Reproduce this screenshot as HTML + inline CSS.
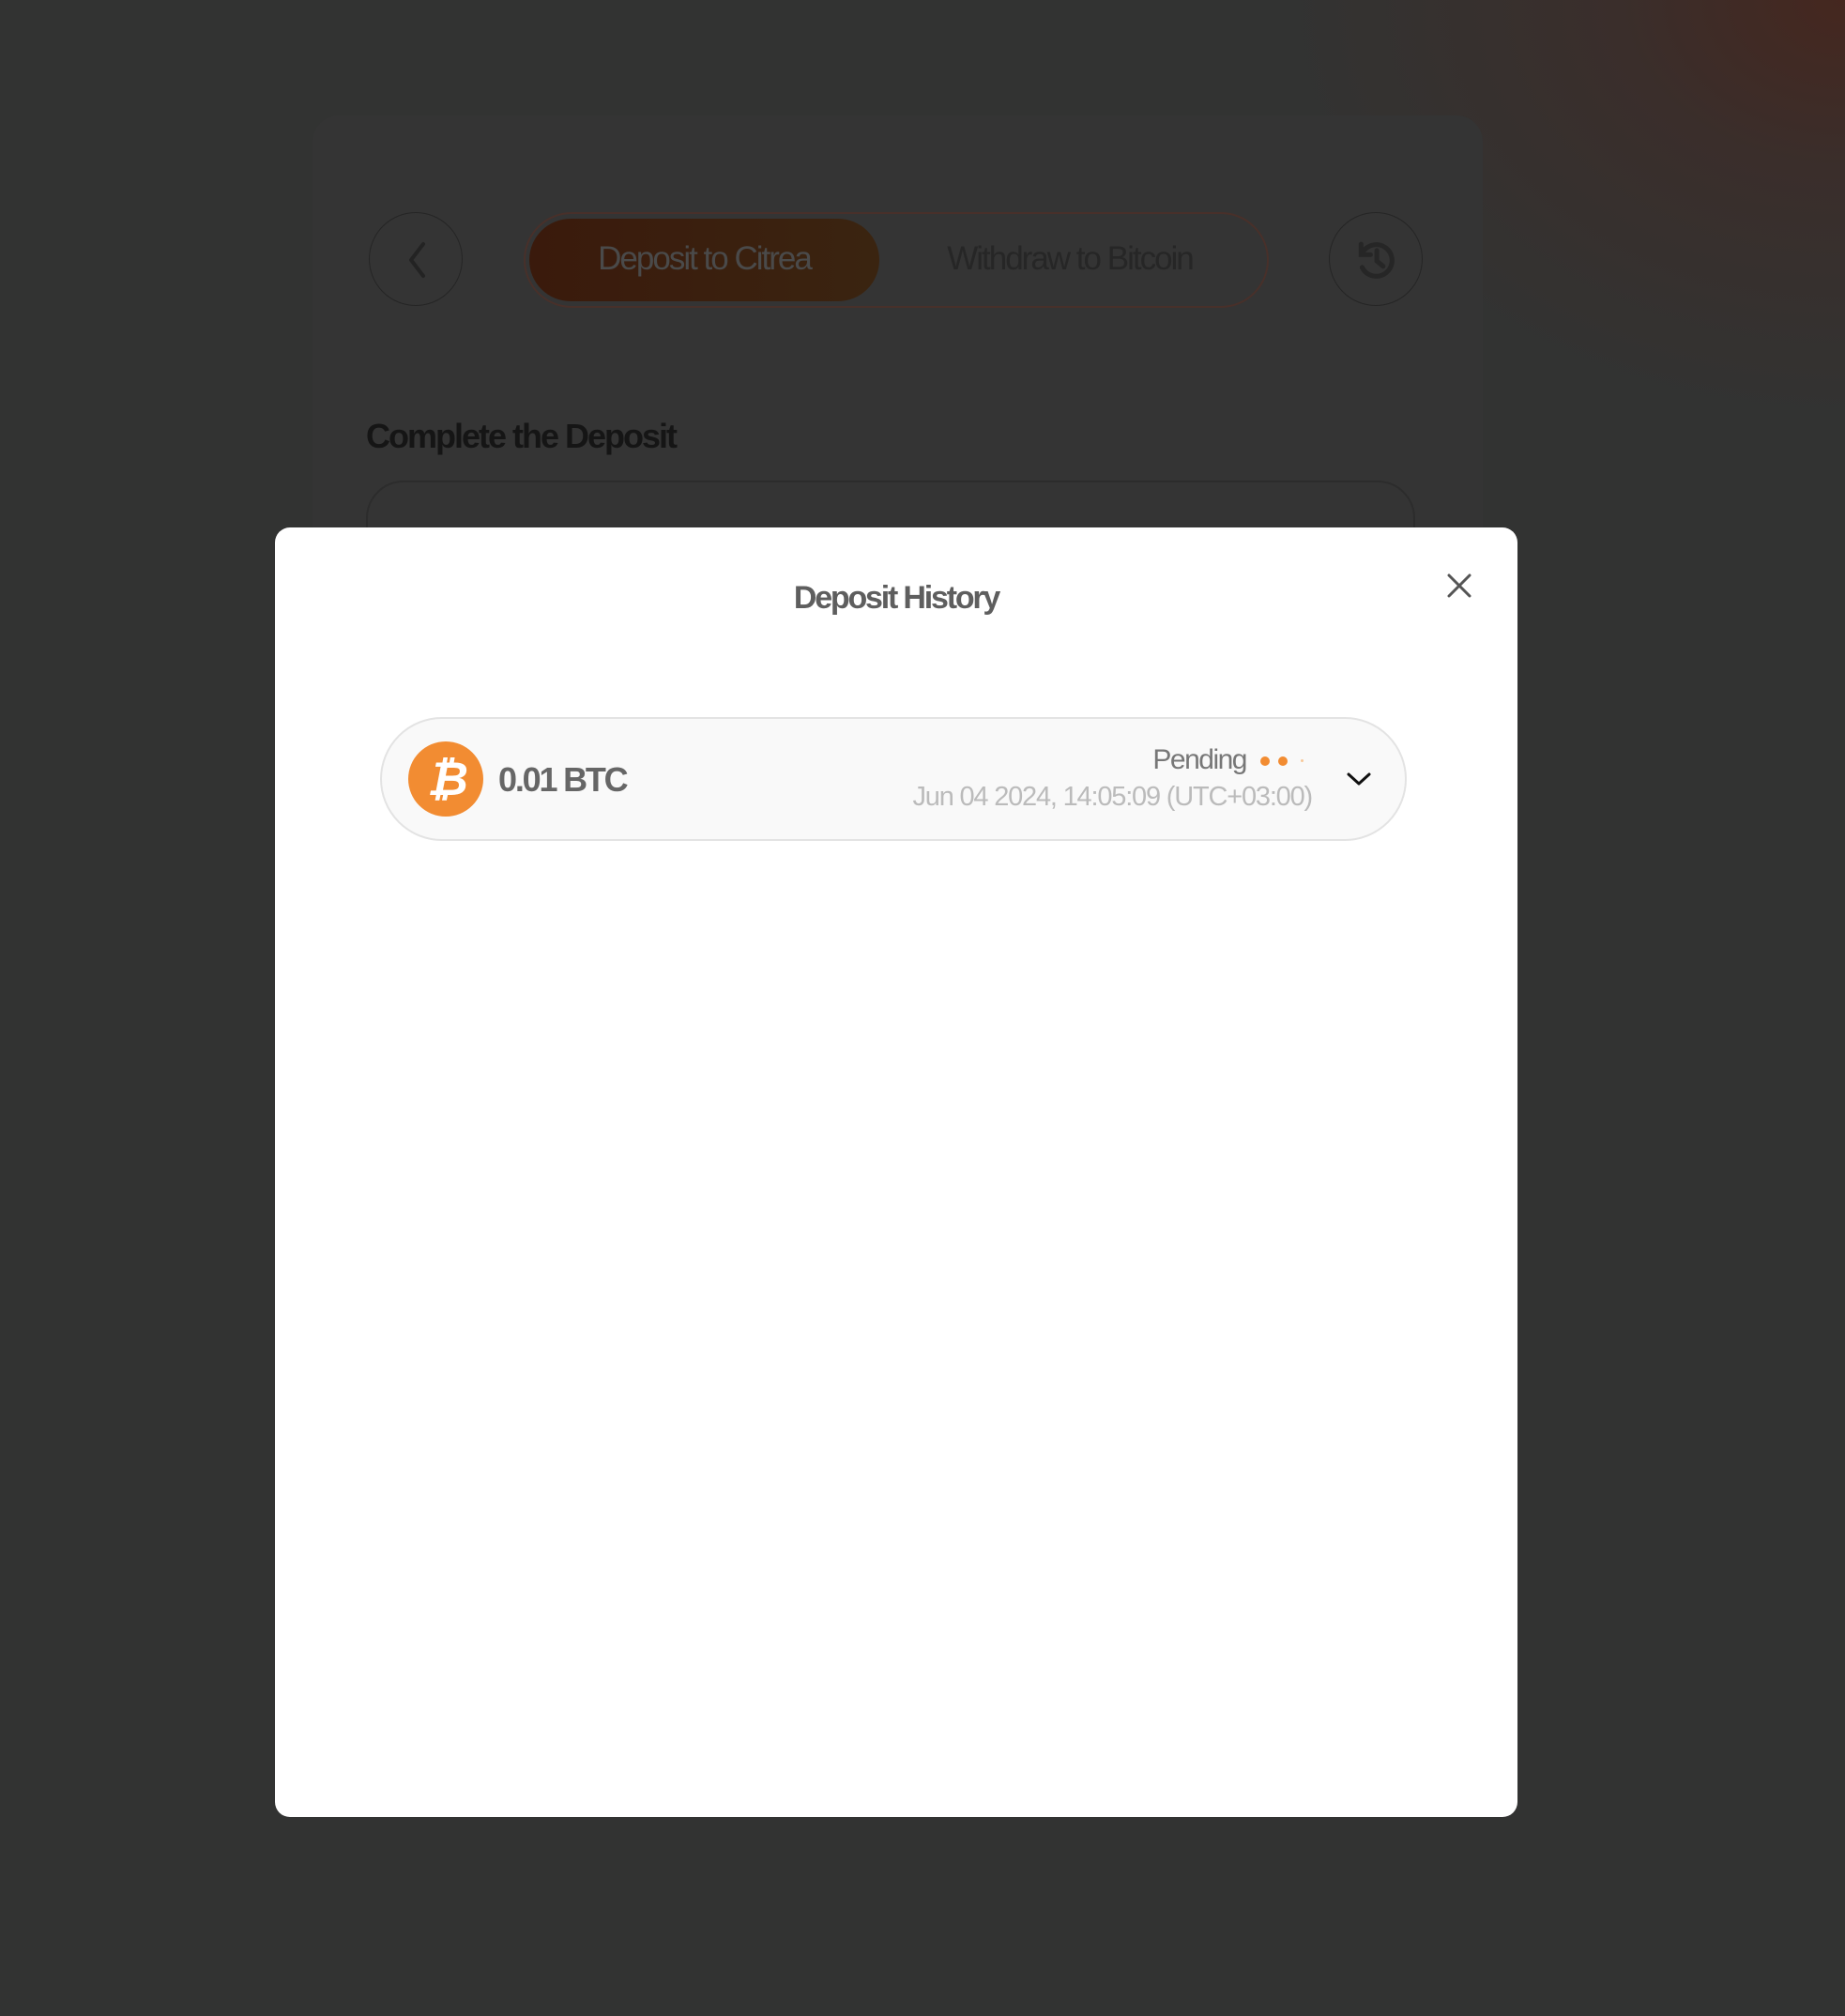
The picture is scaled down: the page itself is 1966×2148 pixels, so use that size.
<!DOCTYPE html>
<html><head><meta charset="utf-8"><style>
html,body{margin:0;padding:0;}
body{width:1966px;height:2148px;position:relative;overflow:hidden;font-family:"Liberation Sans",sans-serif;
background:radial-gradient(ellipse 600px 450px at 1966px 0px,#45271f 0%,#3a2e2b 40%,rgba(50,51,50,0) 100%),#323332;}
.abs{position:absolute;}
.card{left:333px;top:123px;width:1247px;height:700px;border-radius:28px;background:#343434;}
.circ{width:100px;height:100px;border:1.5px solid #252525;border-radius:50%;box-sizing:border-box;}
.tabs{left:558px;top:226px;width:794px;height:102px;border:2px solid #48302a;border-radius:51px;box-sizing:border-box;}
.act{left:564px;top:233px;width:373px;height:88px;border-radius:44px;background:linear-gradient(90deg,#3a1a0c,#3a2410);}
.tt{font-size:35px;letter-spacing:-2px;color:#4a4a4a;}
.modal{left:293px;top:562px;width:1324px;height:1374px;background:#fff;border-radius:16px;}
.row{left:405px;top:764px;width:1094px;height:132px;border:2px solid #e3e3e3;border-radius:66px;background:#f9f9f9;box-sizing:border-box;}
</style></head><body>
<div class="abs card"></div>
<div class="abs circ" style="left:393px;top:226px;"></div>
<svg class="abs" style="left:420px;top:252px" width="50" height="50" viewBox="0 0 50 50"><path d="M31 8 L18 25 L31 42" stroke="#232323" stroke-width="4" fill="none" stroke-linecap="round" stroke-linejoin="round"/></svg>
<div class="abs tabs"></div>
<div class="abs act"></div>
<div class="abs tt" style="left:564px;width:373px;top:256px;text-align:center;">Deposit to Citrea</div>
<div class="abs tt" style="left:940px;width:400px;top:256px;text-align:center;color:#262626;">Withdraw to Bitcoin</div>
<div class="abs circ" style="left:1416px;top:226px;"></div>
<svg class="abs" style="left:1438px;top:249px" width="56" height="56" viewBox="0 0 50 50"><path d="M11 10 L11 20 L20 20 M11.5 20 A15 15 0 1 1 12 32" stroke="#262626" stroke-width="4.5" fill="none" stroke-linecap="round"/><path d="M26 16 V26 L32 31" stroke="#262626" stroke-width="4.5" fill="none" stroke-linecap="round"/></svg>
<div class="abs" style="left:390px;top:444px;font-size:36px;font-weight:bold;letter-spacing:-2px;color:#151515;">Complete the Deposit</div>
<div class="abs" style="left:390px;top:512px;width:1118px;height:100px;border:2px solid #2c2c2c;border-radius:40px;box-sizing:border-box;"></div>

<div class="abs modal"></div>
<div class="abs" style="left:293px;width:1324px;top:618px;text-align:center;font-size:34px;font-weight:bold;letter-spacing:-2.2px;color:#5e5e5e;">Deposit History</div>
<svg class="abs" style="left:1541px;top:610px" width="28" height="28" viewBox="0 0 28 28"><path d="M3 3 L25 25 M25 3 L3 25" stroke="#555" stroke-width="3" stroke-linecap="round"/></svg>
<div class="abs row"></div>
<svg class="abs" style="left:435px;top:790px" width="80" height="80" viewBox="0 0 80 80"><circle cx="40" cy="40" r="40" fill="#f28c32"/><text x="42" y="57" text-anchor="middle" font-family="Liberation Sans" font-weight="bold" font-style="italic" font-size="50" fill="#fff">₿</text></svg>
<div class="abs" style="left:531px;top:810px;font-size:36px;font-weight:bold;letter-spacing:-2.2px;color:#666;">0.01 BTC</div>
<div class="abs" style="left:1100px;width:228px;top:793px;text-align:right;font-size:30px;letter-spacing:-1.5px;color:#777;">Pending</div>
<div class="abs" style="left:1343px;top:806px;width:10px;height:10px;border-radius:50%;background:#f28c32;"></div>
<div class="abs" style="left:1362px;top:806px;width:10px;height:10px;border-radius:50%;background:#f28c32;"></div>
<div class="abs" style="left:1386px;top:809px;width:3px;height:3px;border-radius:50%;background:#f8c89a;"></div>
<div class="abs" style="left:900px;width:498px;top:833px;text-align:right;font-size:29px;letter-spacing:-1.2px;color:#bbb;">Jun 04 2024, 14:05:09 (UTC+03:00)</div>
<svg class="abs" style="left:1434px;top:818px" width="28" height="24" viewBox="0 0 28 24"><path d="M3 7 L14 17 L25 7" stroke="#111" stroke-width="3" fill="none" stroke-linecap="round" stroke-linejoin="round"/></svg>
</body></html>
